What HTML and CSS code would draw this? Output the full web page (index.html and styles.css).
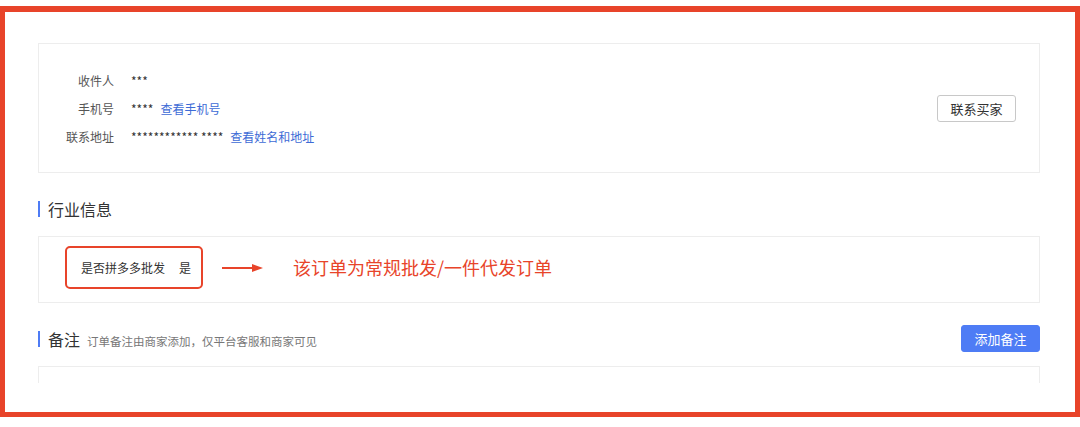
FILE: index.html
```html
<!DOCTYPE html>
<html lang="zh-CN">
<head>
  <meta charset="UTF-8">
  <title>订单详情</title>
  <link rel="stylesheet" href="styles.css">
</head>
<body>
  <div class="frame">
    <div class="card card-buyer">
      <div class="info">
        <div class="row"><span class="label">收件人</span><span class="value">***</span></div>
        <div class="row"><span class="label">手机号</span><span class="value">****</span><a class="link">查看手机号</a></div>
        <div class="row"><span class="label">联系地址</span><span class="value">************ ****</span><a class="link">查看姓名和地址</a></div>
      </div>
      <button class="btn">联系买家</button>
    </div>

    <div class="section-title">行业信息</div>

    <div class="card card-industry">
      <div class="mark-box">
        <span class="field">是否拼多多批发</span>
        <span class="field-value">是</span>
      </div>
      <svg class="arrow" width="42" height="10" viewBox="0 0 42 10">
        <line x1="0" y1="5" x2="32" y2="5" stroke="#e8442a" stroke-width="2"/>
        <polygon points="30,1 41,5 30,9" fill="#e8442a"/>
      </svg>
      <span class="note">该订单为常规批发/一件代发订单</span>
    </div>

    <div class="remark-head">
      <div class="section-title remark-title">备注<span class="sub">订单备注由商家添加，仅平台客服和商家可见</span></div>
      <button class="btn btn-primary">添加备注</button>
    </div>

    <div class="card card-remark"></div>
  </div>
</body>
</html>
```

FILE: styles.css
```css
* {
  margin: 0;
  padding: 0;
  box-sizing: border-box;
  font-family: "Noto Sans CJK SC", "Noto Sans", sans-serif;
}

body {
  background: #fff;
  width: 1080px;
  height: 427px;
  overflow: hidden;
}

.frame {
  margin-top: 6px;
  height: 411px;
  border: 5px solid #e8442a;
  border-top-width: 6px;
  padding: 31px 35px 0 33px;
  overflow: hidden;
}

.card {
  border: 1px solid #ededed;
  background: #fff;
}

.card-buyer {
  height: 130px;
  display: flex;
  align-items: center;
  justify-content: space-between;
  padding: 0 23px 0 27px;
}

.row {
  display: flex;
  align-items: center;
  height: 28px;
  font-size: 12px;
}

.label {
  width: 48px;
  text-align: right;
  color: #555;
  margin-right: 17px;
}

.value {
  color: #333;
}

.link {
  color: #3d6bd6;
  margin-left: 7px;
}

.btn {
  width: 79px;
  height: 27px;
  font-size: 13px;
  color: #333;
  background: #fff;
  border: 1px solid #c8c8c8;
  border-radius: 3px;
}

.btn-primary {
  background: #4e7cf5;
  border-color: #4e7cf5;
  color: #fff;
}

.section-title {
  position: relative;
  margin: 24px 0 15px;
  padding-left: 10px;
  height: 24px;
  line-height: 24px;
  font-size: 16px;
  color: #333;
}

.section-title::before {
  content: "";
  position: absolute;
  left: 0;
  top: 4px;
  width: 2px;
  height: 16px;
  background: #4e7cf5;
}

.card-industry {
  height: 67px;
  display: flex;
  align-items: flex-start;
  padding: 9px 0 0 26px;
}

.mark-box {
  width: 138px;
  height: 43px;
  border: 2px solid #e8442a;
  border-radius: 5px;
  display: flex;
  align-items: center;
  padding-left: 14px;
  font-size: 12px;
  color: #333;
}

.field-value {
  margin-left: 14px;
}

.arrow {
  margin: 17px 0 0 19px;
}

.note {
  margin: 9px 0 0 29px;
  font-size: 18px;
  color: #e8442a;
  line-height: 24px;
}

.remark-head {
  display: flex;
  align-items: center;
  justify-content: space-between;
  margin: 22px 0 14px;
  height: 27px;
}

.remark-title {
  margin: 0;
}

.sub {
  margin-left: 7px;
  font-size: 11.5px;
  color: #777;
}

.card-remark {
  height: 17px;
  border-bottom: none;
}
```
